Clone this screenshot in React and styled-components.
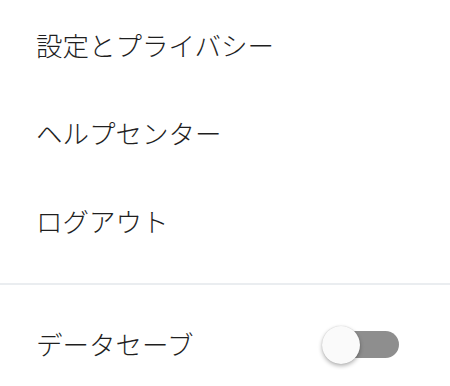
import { useState } from 'react';
import styled, { createGlobalStyle } from 'styled-components';

const GlobalStyle = createGlobalStyle`
  html, body {
    margin: 0;
    padding: 0;
    background: #ffffff;
  }
  body {
    font-family: "Noto Sans CJK JP", "Noto Sans", sans-serif;
  }
`;

const Screen = styled.div`
  width: 450px;
  height: 386px;
  overflow: hidden;
  background: #ffffff;
  display: flex;
  flex-direction: column;
`;

const MenuList = styled.ul`
  list-style: none;
  margin: 0;
  padding: 0 0 19px;
  display: flex;
  flex-direction: column;
`;

const MenuItem = styled.li`
  height: 88px;
  padding-left: 36px;
  display: flex;
  align-items: center;
  font-size: 26.5px;
  font-weight: 300;
  color: #1f1f1f;
  cursor: pointer;
`;

const Divider = styled.hr`
  margin: 0;
  border: none;
  height: 2px;
  background: #eaedf0;
`;

const SettingRow = styled.div`
  height: 88px;
  margin-top: 16px;
  padding: 0 51px 0 36px;
  display: flex;
  align-items: center;
  justify-content: space-between;
  font-size: 26.5px;
  font-weight: 300;
  color: #1f1f1f;
`;

const Track = styled.button`
  position: relative;
  width: 70px;
  height: 27px;
  margin-top: 3px;
  padding: 0;
  border: none;
  border-radius: 14px;
  background: ${p => (p.$on ? '#8ab4f8' : '#8e8e8e')};
  cursor: pointer;
`;

const Thumb = styled.span`
  position: absolute;
  top: 50%;
  left: ${p => (p.$on ? '34px' : '-7px')};
  width: 38px;
  height: 38px;
  margin-top: -19px;
  border-radius: 50%;
  background: #fafafa;
  box-shadow: 0 2px 4px rgba(0, 0, 0, 0.3), 0 0 1px rgba(0, 0, 0, 0.2);
`;

const items = ['設定とプライバシー', 'ヘルプセンター', 'ログアウト'];

const App = () => {
  const [saver, setSaver] = useState(false);
  return (
    <Screen>
      <GlobalStyle />
      <MenuList>
        {items.map(label => (
          <MenuItem key={label}>{label}</MenuItem>
        ))}
      </MenuList>
      <Divider />
      <SettingRow>
        <span>データセーブ</span>
        <Track $on={saver} onClick={() => setSaver(!saver)} aria-label="データセーブ">
          <Thumb $on={saver} />
        </Track>
      </SettingRow>
    </Screen>
  );
};

export default App;
